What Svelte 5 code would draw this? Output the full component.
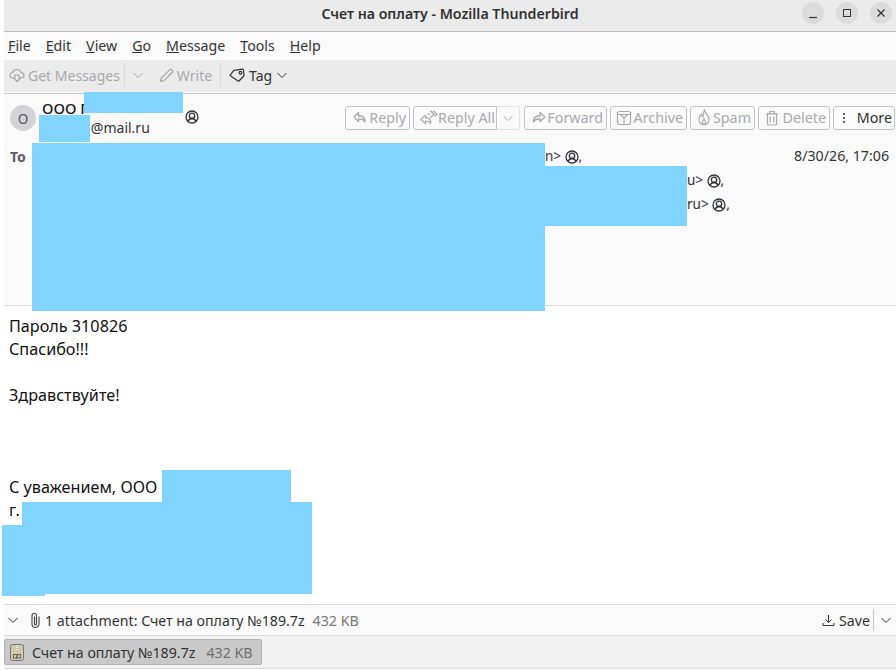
<script>
  const menus = [['F','ile'],['E','dit'],['V','iew'],['G','o'],['M','essage'],['T','ools'],['H','elp']];
  const recipients = [['r1','n>'],['r2','u>'],['r3','ru>']];
  const redactions = [
    { x: 84, y: 92, w: 99, h: 21 },
    { x: 39, y: 115, w: 51, h: 27 },
    { x: 32, y: 143, w: 513, h: 168 },
    { x: 545, y: 166, w: 142, h: 60 },
    { x: 162, y: 470, w: 129, h: 32 },
    { x: 22, y: 502, w: 290, h: 23 },
    { x: 2, y: 525, w: 310, h: 69 },
    { x: 2, y: 594, w: 43, h: 2 }
  ];
</script>

{#snippet contact()}
  <svg class="contact" width="14" height="14" viewBox="0 0 14 14" fill="none" stroke="#33333b" stroke-width="1.300"><circle cx="7" cy="7" r="6"/><circle cx="7" cy="5.800" r="2.700"/><path d="M3 11.500c.8-2 2.200-3 4-3s3.200 1 4 3"/></svg>
{/snippet}
{#snippet chevron()}
  <svg width="12" height="12" viewBox="0 0 12 12" fill="none" stroke="currentColor"><path d="M1.500 4l4.500 4.500L10.500 4"/></svg>
{/snippet}

<div class="page">
  <header class="titlebar">
    <span class="title">Счет на оплату - Mozilla Thunderbird</span>
    <div class="winbtns">
      <span class="winbtn"><svg width="12" height="12" viewBox="0 0 12 12"><path d="M2 10.500h8" stroke="#333" stroke-width="1.200"/></svg></span>
      <span class="winbtn"><svg width="12" height="12" viewBox="0 0 12 12"><rect x="2.500" y="2.500" width="7" height="7" fill="none" stroke="#333"/></svg></span>
      <span class="winbtn"><svg width="12" height="12" viewBox="0 0 12 12"><path d="M2.500 2.500l7 7M9.500 2.500l-7 7" stroke="#333" stroke-width="1.200"/></svg></span>
    </div>
  </header>

  <nav class="menubar">
    {#each menus as m}
      <span class="menu"><u>{m[0]}</u>{m[1]}</span>
    {/each}
  </nav>

  <div class="toolbar">
    <span class="tool off">
      <svg width="16" height="16" viewBox="0 0 16 16" fill="none" stroke="currentColor" stroke-width="1.200"><path d="M5 11H4C2.300 11 1 9.800 1 8.200 1 6.700 2.100 5.600 3.600 5.500 4.100 3.600 5.800 2.500 7.800 2.500c2.200 0 3.900 1.300 4.300 3.100 1.700.1 2.900 1.200 2.900 2.700 0 1.600-1.300 2.700-3 2.700h-1"/><path d="M6 8v3H4.500L8 14.500l3.500-3.500H10V8z" stroke-linejoin="round"/></svg>
      Get Messages
    </span>
    <span class="vsep"></span>
    <span class="chev off">{@render chevron()}</span>
    <span class="tool off write">
      <svg width="15" height="15" viewBox="0 0 15 15" fill="none" stroke="currentColor" stroke-width="1.200"><path d="M1.500 13.500l.9-3.500L10.800 1.600a1.200 1.200 0 0 1 1.700 0l.9.9a1.200 1.200 0 0 1 0 1.700L5 12.600z" stroke-linejoin="round"/></svg>
      Write
    </span>
    <span class="vsep two"></span>
    <span class="tool tag">
      <svg width="16" height="16" viewBox="0 0 16 16" fill="none" stroke="currentColor" stroke-width="1.200"><path d="M1 7.500l4.500-4.500h8.500a1 1 0 0 1 1 1v5.500L9.500 14a1 1 0 0 1-1.300 0z" stroke-linejoin="round" transform="rotate(-8 8 8)"/><circle cx="11.500" cy="5.800" r="1.400"/></svg>
      Tag
      {@render chevron()}
    </span>
  </div>

  <section class="msghead">
    <div class="fromrow">
      <span class="avatar">О</span>
      <div class="sender">
        <div class="name">ООО Г<span class="contact-gap"></span>{@render contact()}</div>
        <div class="mail">a@mail.ru</div>
      </div>
      <div class="actions">
        <span class="btn off w-reply"><svg width="13" height="13" viewBox="0 0 13 13" fill="none" stroke="currentColor" stroke-width="1.300"><path d="M5.500 1.500L1 6l4.500 4.500V8h2c2 0 3.500.8 4.500 3 0-4-1.500-6-4.500-6h-2z" stroke-linejoin="round"/></svg>Reply</span>
        <span class="split">
          <span class="btn off first w-all"><svg width="20" height="17" viewBox="0 0 20 17" fill="none" stroke="currentColor" stroke-width="1.300"><path d="M7 6L2 10.500 7 15v-2.500h3c1 0 1.700.7 2 2.500 1-3-.5-6-3-6H7zM12 1.500L16 5l-4 3.500M15 1.500L19 5l-2.500 2.500M12 5H9" stroke-linejoin="round"/></svg>Reply All</span>
          <span class="btn off last">{@render chevron()}</span>
        </span>
        <span class="btn off w-fwd"><svg width="14" height="13" viewBox="0 0 14 13" fill="none" stroke="currentColor" stroke-width="1.300"><path d="M8 1.500L13 6 8 10.500V8H6c-2 0-3.500.8-4.500 3 0-4 1.500-6 4.500-6h2z" stroke-linejoin="round"/></svg>Forward</span>
        <span class="btn off w-arch"><svg width="16" height="16" viewBox="0 0 16 16" fill="none" stroke="currentColor" stroke-width="1.200"><rect x="1.500" y="1.500" width="13" height="13" rx="2"/><path d="M1.500 4.500h13M4.500 4.500L8 8l3.500-3.500M8 8v6.500"/></svg>Archive</span>
        <span class="btn off w-spam"><svg width="14" height="17" viewBox="0 0 14 17" fill="none" stroke="currentColor" stroke-width="1.200"><path d="M7.500 1c.3 3 4.500 5 4.500 9.500 0 3-2.200 5.500-5 5.500s-5-2.500-5-5.500c0-2.500 1.200-4 2.500-5.200 0 1.500.5 2.400 1.300 2.900C6.500 6 6.300 3 7.500 1z"/><path d="M7 10c.4 1 1.700 1.800 1.700 3.300a1.700 1.700 0 0 1-3.400 0c0-1.200 1.200-2.200 1.700-3.300z"/></svg>Spam</span>
        <span class="btn off w-del"><svg width="14" height="16" viewBox="0 0 14 16" fill="none" stroke="currentColor" stroke-width="1.200"><path d="M1 3.800h12M4.800 3.800V1.500h4.400v2.300M2.500 3.800v10a1.200 1.200 0 0 0 1.200 1.200h6.600a1.200 1.200 0 0 0 1.200-1.200v-10M5.300 6.500v6M8.700 6.500v6"/></svg>Delete</span>
        <span class="btn more w-more"><svg width="12" height="14" viewBox="0 0 12 14" fill="currentColor"><circle cx="4" cy="3" r="1"/><circle cx="4" cy="7" r="1"/><circle cx="4" cy="11" r="1"/></svg>More</span>
      </div>
    </div>
    <div class="torow">
      <span class="tolabel">To</span>
      {#each recipients as r}
        <div class="recip {r[0]}">{r[1]} {@render contact()},</div>
      {/each}
      <span class="date">8/30/26, 17:06</span>
    </div>
  </section>

  <main class="body">
    <p>Пароль 310826</p>
    <p>Спасибо!!!</p>
    <p></p>
    <p>Здравствуйте!</p>
    <p></p>
    <p></p>
    <p></p>
    <p>С уважением, ООО</p>
    <p>г.</p>
  </main>

  <div class="attbar">
    <span class="twisty">{@render chevron()}</span>
    <svg class="clip" width="11" height="17" viewBox="0 0 11 17" fill="none" stroke="#444" stroke-width="1.100"><path d="M9 4.500V12a3.500 3.500 0 0 1-7 0V3.500a2.200 2.200 0 0 1 4.500 0V12a1 1 0 0 1-2 0V4.500"/></svg>
    <span class="attname">1 attachment: Счет на оплату №189.7z</span>
    <span class="attsize">432 KB</span>
    <span class="spacer"></span>
    <svg width="13" height="13" viewBox="0 0 13 13" fill="none" stroke="#333"><path d="M6.500 1v7.500M3.500 5.500l3 3 3-3M1 9v2.500h11V9"/></svg>
    <span class="save">Save</span>
    <span class="savesep"></span>
    <span class="twisty">{@render chevron()}</span>
  </div>

  <div class="attlist">
    <span class="attitem">
      <svg width="14" height="17" viewBox="0 0 14 17"><rect x=".5" y=".5" width="13" height="16" rx="2" fill="#cfc9a8" stroke="#777"/><path d="M7 1v6" stroke="#fff" stroke-dasharray="1 1"/><rect x="3.500" y="10.500" width="3.500" height="3.500" fill="none" stroke="#666"/><rect x="7" y="10.500" width="3.500" height="3.500" fill="none" stroke="#666"/></svg>
      <span>Счет на оплату №189.7z</span>
      <span class="itemsize">432 KB</span>
    </span>
  </div>

  {#each redactions as r}
    <div class="redact" style="left:{r.x}px;top:{r.y}px;width:{r.w}px;height:{r.h}px"></div>
  {/each}
</div>

<style>
  :global(body) { margin: 0; background: #fff; }
  .page {
    position: relative; width: 896px; height: 670px; overflow: hidden;
    padding: 0 0 1px 4px; box-sizing: border-box;
    display: flex; flex-direction: column;
    font-family: "Noto Sans", "Open Sans", sans-serif; font-size: 14px; color: #2b2b33;
  }
  .titlebar {
    height: 31px; flex: none; background: #ebebeb; border-bottom: 1px solid #bfbfbf;
    display: flex; align-items: center; justify-content: center; position: relative;
  }
  .title { font-weight: 600; font-size: 14.200px; color: #333; margin: 0 0 4px 0; }
  .winbtns { position: absolute; right: 4px; top: 2px; display: flex; gap: 12px; }
  .winbtn { width: 22px; height: 22px; border-radius: 50%; background: #dcdcdc; display: flex; align-items: center; justify-content: center; }
  .menubar { height: 28px; flex: none; background: #fafafa; display: flex; align-items: center; padding: 0 0 2px 4px; box-sizing: border-box; gap: 15px; font-size: 14.200px; color: #333; }
  .toolbar { height: 33px; box-sizing: border-box; flex: none; background: #ebebeb; border-bottom: 1px solid #fff; display: flex; align-items: center; padding: 0 0 2px 5px; }
  .tool { display: flex; align-items: center; gap: 3px; font-size: 14px; }
  .off { color: #a9a9ad; }
  .vsep { width: 1px; height: 24px; background: #d8d8d8; margin: 0 7px 0 4px; }
  .vsep.two { margin: 0 8px 0 8px; }
  .chev { margin-right: 15px; display: flex; }
  .tag { color: #333; gap: 4px; }
  .msghead { height: 211px; flex: none; border-top: 1px solid #c9c9c9; border-bottom: 1px solid #dcdcdc; background: #fafafa; }
  .fromrow { display: flex; height: 48px; align-items: flex-start; }
  .avatar { width: 26px; height: 26px; border-radius: 50%; background: #d4d4d8; color: #5a5a60; font-size: 14px; display: flex; align-items: center; justify-content: center; margin: 11px 0 0 6px; flex: none; }
  .sender { margin-left: 3px; width: 306px; flex: none; }
  .name { font-size: 15px; font-weight: 500; color: #1a1a1a; margin: 4px 0 0 3px; height: 20px; display: flex; align-items: center; }
  .contact-gap { width: 97px; }
  .contact { flex: none; vertical-align: -2.500px; }
  :global(.name .contact) { margin-top: 18px; }
  .mail { font-size: 14px; line-height: 18px; color: #333; margin: 1px 0 0 44px; }
  .actions { display: flex; gap: 3px; margin-top: 12px; }
  .btn { height: 24px; box-sizing: border-box; border: 1px solid #c4c4c6; border-radius: 3px; display: flex; align-items: center; justify-content: space-between; padding: 0 3px 1px 7px; font-size: 14.300px; background: #fafafa; white-space: nowrap; flex: none; }
  .split { display: flex; margin-right: 1px; }
  .first { border-radius: 3px 0 0 3px; padding: 0 1px 1px 5px; }
  .last { border-color: #e3e3e3; border-left: 0; border-radius: 0 3px 3px 0; padding: 0 5px; width: 23px; }
  .w-reply { width: 65px; }
  .w-all { width: 84px; }
  .w-fwd { width: 83px; }
  .w-arch { width: 77px; padding-left: 5px; }
  .w-spam { width: 65px; padding-left: 6px; }
  .w-del { width: 72px; padding-left: 6px; }
  .w-more { width: 62px; padding: 0 2px 1px 6px; }
  .more { color: #333; }
  .torow { position: relative; height: 160px; }
  .tolabel { position: absolute; left: 6px; top: 5px; font-size: 14px; font-weight: 700; color: #5c5c62; }
  .recip { position: absolute; font-size: 13.500px; white-space: nowrap; color: #333; }
  .r1 { left: 541px; top: 5px; }
  .r2 { left: 683px; top: 29px; }
  .r3 { left: 683px; top: 53px; }
  .date { position: absolute; right: 7px; top: 4px; font-size: 14.200px; color: #333; }
  .body { flex: 1; background: #fff; padding: 9px 0 0 5px; font-size: 16.200px; line-height: 23px; color: #111; }
  .body p { margin: 0; height: 23px; }
  .attbar { height: 30px; flex: none; border-top: 1px solid #dcdcdc; border-bottom: 1px solid #dcdcdc; background: #fafafa; display: flex; align-items: center; padding: 0 4px 0 3px; font-size: 14.200px; color: #333; }
  .twisty { display: flex; }
  .clip { margin: 0 4px 0 11px; }
  .attsize { color: #777; margin-left: 8px; }
  .spacer { flex: 1; }
  .save { margin-left: 4px; }
  .savesep { width: 1px; height: 22px; background: #c8c8c8; margin: 0 6px 0 3px; }
  .attlist { height: 32px; flex: none; background: #f2f2f2; border-bottom: 1px solid #dcdcdc; display: flex; align-items: center; }
  .attitem { height: 26px; width: 258px; box-sizing: border-box; background: #c9c9c9; border: 1px solid #b5b5b5; border-radius: 2px; display: flex; align-items: center; gap: 8px; padding-left: 5px; font-size: 14.200px; color: #333; }
  .itemsize { color: #6e6e6e; margin-left: 3px; }
  .redact { position: absolute; background: #80d4ff; }
</style>
